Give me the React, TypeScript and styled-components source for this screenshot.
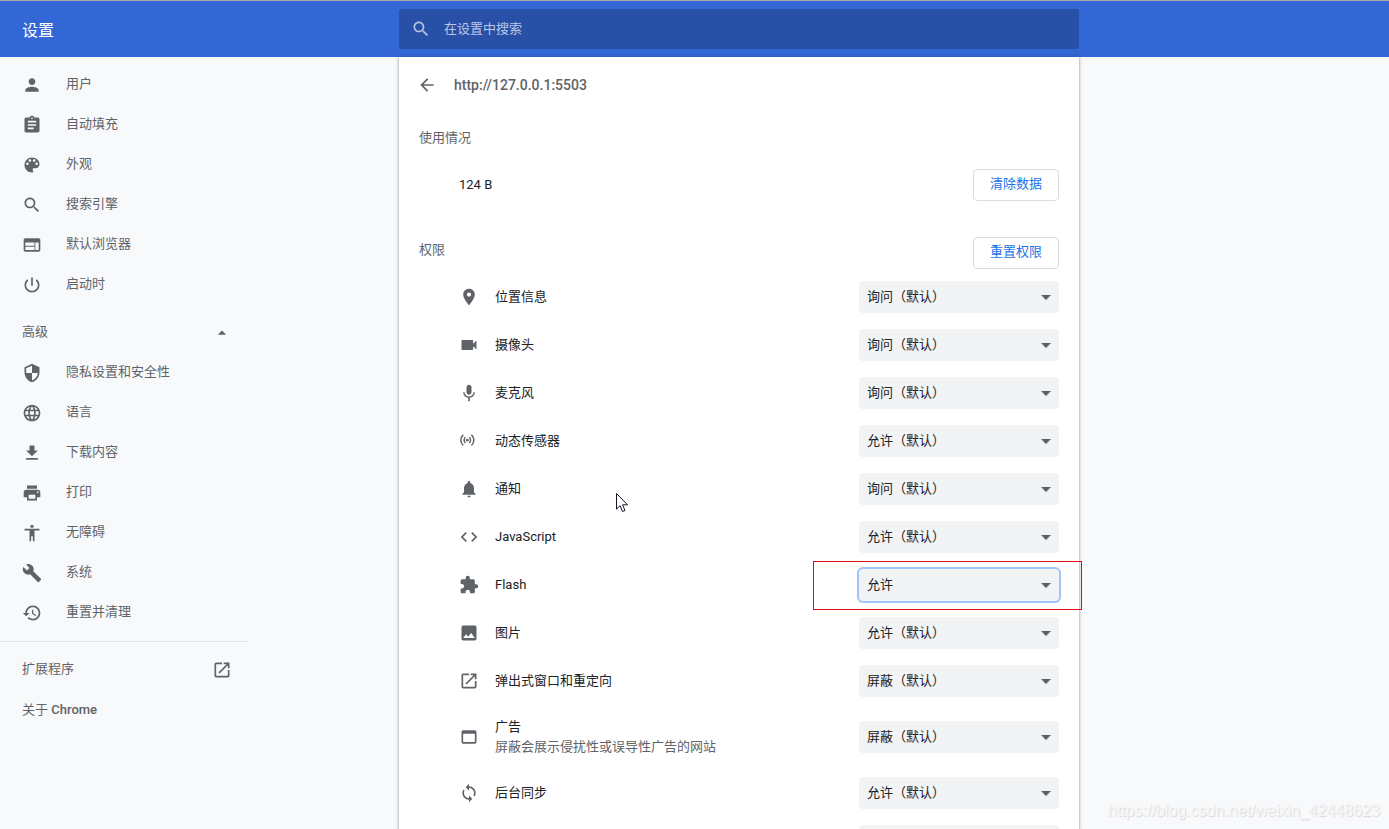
import React from "react";
import styled, { createGlobalStyle } from "styled-components";

const GlobalStyle = createGlobalStyle`
  * { box-sizing: border-box; }
  body {
    margin: 0;
    background: #f8f9fb;
    color: #202124;
    font: 13px/20px Roboto, "Noto Sans CJK SC", sans-serif;
  }
  button, input, select { font: inherit; }
  ul, h1, h2, p { margin: 0; padding: 0; font-size: inherit; font-weight: 400; }
`;

const PATHS = {
  person: "M12 12c2.21 0 4-1.79 4-4s-1.79-4-4-4-4 1.79-4 4 1.79 4 4 4zm0 2c-2.67 0-8 1.34-8 4v2h16v-2c0-2.66-5.33-4-8-4z",
  assignment: "M19 3h-4.18C14.4 1.84 13.3 1 12 1c-1.3 0-2.4.84-2.82 2H5c-1.1 0-2 .9-2 2v14c0 1.1.9 2 2 2h14c1.1 0 2-.9 2-2V5c0-1.1-.9-2-2-2zm-7 0c.55 0 1 .45 1 1s-.45 1-1 1-1-.45-1-1 .45-1 1-1zm2 14H7v-2h7v2zm3-4H7v-2h10v2zm0-4H7V7h10v2z",
  palette: "M12 3c-4.97 0-9 4.03-9 9s4.03 9 9 9c.83 0 1.5-.67 1.5-1.5 0-.39-.15-.74-.39-1.01-.23-.26-.38-.61-.38-.99 0-.83.67-1.5 1.5-1.5H16c2.76 0 5-2.24 5-5 0-4.42-4.03-8-9-8zm-5.5 9c-.83 0-1.5-.67-1.5-1.5S5.67 9 6.5 9 8 9.67 8 10.5 7.33 12 6.5 12zm3-4C8.67 8 8 7.33 8 6.5S8.67 5 9.5 5s1.5.67 1.5 1.5S10.33 8 9.5 8zm5 0c-.83 0-1.5-.67-1.5-1.5S13.67 5 14.5 5s1.5.67 1.5 1.5S15.33 8 14.5 8zm3 4c-.83 0-1.5-.67-1.5-1.5S16.67 9 17.5 9s1.5.67 1.5 1.5-.67 1.5-1.5 1.5z",
  search: "M15.5 14h-.79l-.28-.27C15.41 12.59 16 11.11 16 9.5 16 5.91 13.09 3 9.5 3S3 5.91 3 9.5 5.91 16 9.5 16c1.61 0 3.09-.59 4.23-1.57l.27.28v.79l5 4.99L20.49 19l-4.99-5zm-6 0C7.01 14 5 11.99 5 9.5S7.01 5 9.5 5 14 7.01 14 9.5 11.99 14 9.5 14z",
  web: "M20 4H4c-1.1 0-1.99.9-1.99 2L2 18c0 1.1.9 2 2 2h16c1.1 0 2-.9 2-2V6c0-1.1-.9-2-2-2zm-5 14H4v-4h11v4zm0-5H4V9h11v4zm5 5h-4V9h4v9z",
  power: "M13 3h-2v10h2V3zm4.83 2.17l-1.42 1.42C17.99 7.86 19 9.81 19 12c0 3.87-3.13 7-7 7s-7-3.13-7-7c0-2.19 1.01-4.14 2.58-5.42L6.17 5.17C4.23 6.82 3 9.26 3 12c0 4.97 4.03 9 9 9s9-4.03 9-9c0-2.74-1.23-5.18-3.17-6.83z",
  security: "M12 1L3 5v6c0 5.55 3.84 10.74 9 12 5.16-1.26 9-6.45 9-12V5l-9-4zm0 10.99h7c-.53 4.12-3.28 7.79-7 8.94V12H5V6.3l7-3.11v8.8z",
  language: "M11.99 2C6.47 2 2 6.48 2 12s4.47 10 9.99 10C17.52 22 22 17.52 22 12S17.52 2 11.99 2zm6.93 6h-2.95c-.32-1.25-.78-2.45-1.38-3.56 1.84.63 3.37 1.91 4.33 3.56zM12 4.04c.83 1.2 1.48 2.53 1.91 3.96h-3.82c.43-1.43 1.08-2.76 1.91-3.96zM4.26 14C4.1 13.36 4 12.69 4 12s.1-1.36.26-2h3.38c-.08.66-.14 1.32-.14 2 0 .68.06 1.34.14 2H4.26zm.82 2h2.95c.32 1.25.78 2.45 1.38 3.56-1.84-.63-3.37-1.9-4.33-3.56zm2.95-8H5.08c.96-1.66 2.49-2.93 4.33-3.56C8.81 5.55 8.35 6.75 8.03 8zM12 19.96c-.83-1.2-1.48-2.53-1.91-3.96h3.82c-.43 1.43-1.08 2.76-1.91 3.96zM14.34 14H9.66c-.09-.66-.16-1.32-.16-2 0-.68.07-1.35.16-2h4.68c.09.65.16 1.32.16 2 0 .68-.07 1.34-.16 2zm.25 5.56c.6-1.11 1.06-2.31 1.38-3.56h2.95c-.96 1.65-2.49 2.93-4.33 3.56zM16.36 14c.08-.66.14-1.32.14-2 0-.68-.06-1.34-.14-2h3.38c.16.64.26 1.31.26 2s-.1 1.36-.26 2h-3.38z",
  download: "M19 9h-4V3H9v6H5l7 7 7-7zM5 18v2h14v-2H5z",
  print: "M19 8H5c-1.66 0-3 1.34-3 3v6h4v4h12v-4h4v-6c0-1.66-1.34-3-3-3zm-3 11H8v-5h8v5zm3-7c-.55 0-1-.45-1-1s.45-1 1-1 1 .45 1 1-.45 1-1 1zm-1-9H6v4h12V3z",
  accessibility: "M12 2c1.1 0 2 .9 2 2s-.9 2-2 2-2-.9-2-2 .9-2 2-2zm9 7h-6v13h-2v-6h-2v6H9V9H3V7h18v2z",
  build: "M22.7 19l-9.1-9.1c.9-2.3.4-5-1.5-6.9-2-2-5-2.4-7.4-1.3L9 6 6 9 1.6 4.7C.4 7.1.9 10.1 2.9 12.1c1.9 1.9 4.6 2.4 6.9 1.5l9.1 9.1c.4.4 1 .4 1.4 0l2.3-2.3c.5-.4.5-1.1.1-1.4z",
  restore: "M13 3c-4.97 0-9 4.03-9 9H1l3.89 3.89.07.14L9 12H6c0-3.87 3.13-7 7-7s7 3.13 7 7-3.13 7-7 7c-1.93 0-3.68-.79-4.94-2.06l-1.42 1.42C8.27 19.99 10.51 21 13 21c4.97 0 9-4.03 9-9s-4.03-9-9-9zm-1 5v5l4.28 2.54.72-1.21-3.5-2.08V8H12z",
  open: "M19 19H5V5h7V3H5c-1.11 0-2 .9-2 2v14c0 1.1.89 2 2 2h14c1.1 0 2-.9 2-2v-7h-2v7zM14 3v2h3.59l-9.83 9.83 1.41 1.41L19 6.41V10h2V3h-7z",
  place: "M12 2C8.13 2 5 5.13 5 9c0 5.25 7 13 7 13s7-7.75 7-13c0-3.87-3.13-7-7-7zm0 9.5c-1.38 0-2.5-1.12-2.5-2.5s1.12-2.5 2.5-2.5 2.5 1.12 2.5 2.5-1.12 2.5-2.5 2.5z",
  videocam: "M17 10.5V7c0-.55-.45-1-1-1H4c-.55 0-1 .45-1 1v10c0 .55.45 1 1 1h12c.55 0 1-.45 1-1v-3.5l4 4v-11l-4 4z",
  mic: "M12 14c1.66 0 2.99-1.34 2.99-3L15 5c0-1.66-1.34-3-3-3S9 3.34 9 5v6c0 1.66 1.34 3 3 3zm5.3-3c0 3-2.54 5.1-5.3 5.1S6.7 14 6.7 11H5c0 3.41 2.72 6.23 6 6.72V22h2v-4.28c3.28-.48 6-3.3 6-6.72h-1.7z",
  sensors: "",
  notifications: "M12 22c1.1 0 2-.9 2-2h-4c0 1.1.89 2 2 2zm6-6v-5c0-3.07-1.64-5.64-4.5-6.32V4c0-.83-.67-1.5-1.5-1.5s-1.5.67-1.5 1.5v.68C7.63 5.36 6 7.92 6 11v5l-2 2v1h16v-1l-2-2z",
  code: "M9.4 16.6L4.8 12l4.6-4.6L8 6l-6 6 6 6 1.4-1.4zm5.2 0l4.6-4.6-4.6-4.6L16 6l6 6-6 6-1.4-1.4z",
  extension: "M20.5 11H19V7c0-1.1-.9-2-2-2h-4V3.5C13 2.12 11.88 1 10.5 1S8 2.12 8 3.5V5H4c-1.1 0-1.99.9-1.99 2v3.8H3.5c1.49 0 2.7 1.21 2.7 2.7s-1.21 2.7-2.7 2.7H2V20c0 1.1.9 2 2 2h3.8v-1.5c0-1.49 1.21-2.7 2.7-2.7 1.49 0 2.7 1.21 2.7 2.7V22H17c1.1 0 2-.9 2-2v-4h1.5c1.38 0 2.5-1.12 2.5-2.5S21.88 11 20.5 11z",
  photo: "M21 19V5c0-1.1-.9-2-2-2H5c-1.1 0-2 .9-2 2v14c0 1.1.9 2 2 2h14c1.1 0 2-.9 2-2zM8.5 13.5l2.5 3.01L14.5 12l4.5 6H5l3.5-4.5z",
  webAsset: "M19 4H5c-1.11 0-2 .9-2 2v12c0 1.1.89 2 2 2h14c1.1 0 2-.9 2-2V6c0-1.1-.9-2-2-2zm0 14H5V8h14v10z",
  sync: "M12 4V1L8 5l4 4V6c3.31 0 6 2.69 6 6 0 1.01-.25 1.97-.7 2.8l1.46 1.46C19.54 15.03 20 13.57 20 12c0-4.42-3.58-8-8-8zm0 14c-3.31 0-6-2.69-6-6 0-1.01.25-1.97.7-2.8L5.24 7.74C4.46 8.97 4 10.43 4 12c0 4.42 3.58 8 8 8v3l4-4-4-4v3z",
  back: "M20 11H7.83l5.59-5.59L12 4l-8 8 8 8 1.41-1.41L7.83 13H20v-2z",
  dropUp: "M7 14l5-5 5 5z",
};

type IconName = keyof typeof PATHS;

const IconSvg = styled.svg`
  flex: none;
  display: block;
  fill: currentColor;
`;

function Icon({ name }: { name: IconName }) {
  return (
    <IconSvg width="20" height="20" viewBox="0 0 24 24" aria-hidden="true">
      {name === "sensors" ? (
        <>
          <circle cx="10" cy="11" r="1.7" />
          <path
            d="M7.6 7.6a4.8 4.8 0 0 0 0 6.8M12.4 7.6a4.8 4.8 0 0 1 0 6.8M5.1 4.6a8.6 8.6 0 0 0 0 12.8M14.9 4.6a8.6 8.6 0 0 1 0 12.8"
            fill="none"
            stroke="currentColor"
            strokeWidth="1.8"
          />
        </>
      ) : (
        <path d={PATHS[name]} />
      )}
    </IconSvg>
  );
}

const Page = styled.div`
  position: relative;
  display: flex;
  flex-direction: column;
  height: 100vh;
  overflow: hidden;
`;

const Toolbar = styled.header`
  flex: none;
  display: flex;
  align-items: center;
  height: 57px;
  border-top: 1px solid #a9a9ad;
  background: #3367d6;
  color: #fff;
`;

const StartColumn = styled.div`
  flex: 1 0 89px;
`;

const CenterColumn = styled.div`
  flex: 0 1 680px;
  min-width: 0;
`;

const EndColumn = styled.div`
  flex: 1 0 0;
`;

const ToolbarTitle = styled.h1`
  padding: 4px 0 0 22px;
  font-size: 16px;
  line-height: 24px;
`;

const SearchField = styled.label`
  display: flex;
  align-items: center;
  gap: 13px;
  height: 40px;
  padding: 0 12px;
  border-radius: 2px;
  background: #2850a7;
  color: #b4c3e3;
`;

const SearchInput = styled.input`
  flex: 1;
  min-width: 0;
  height: 24px;
  padding: 0 0 2px;
  border: 0;
  outline: 0;
  background: none;
  color: #fff;
  &::placeholder { color: #b9c7e5; opacity: 1; }
`;

const Body = styled.div`
  flex: 1;
  display: flex;
  min-height: 0;
`;

const Sidebar = styled.nav`
  width: 248px;
  padding-top: 8px;
  color: #5f6368;
`;

const MenuList = styled.ul`
  list-style: none;
`;

const MenuLink = styled.a`
  display: flex;
  align-items: center;
  gap: 24px;
  height: 40px;
  padding-left: 22px;
  color: inherit;
  text-decoration: none;
`;

const MenuLabel = styled.span`
  padding-bottom: 2px;
`;

const AdvancedToggle = styled.button`
  display: flex;
  align-items: center;
  justify-content: space-between;
  width: 100%;
  height: 40px;
  margin-top: 8px;
  padding: 0 16px 0 22px;
  border: 0;
  background: none;
  color: inherit;
`;

const Footer = styled.div`
  margin-top: 8px;
  padding-top: 8px;
  border-top: 1px solid #e2e3e5;
`;

const FooterLink = styled(MenuLink)`
  justify-content: space-between;
  padding-right: 16px;
`;

const Medium = styled.span`
  font-weight: 500;
`;

const Card = styled(CenterColumn).attrs({ as: "main" })`
  padding: 8px 20px 0;
  background: #fff;
  box-shadow: 0 1px 2px rgba(60, 64, 67, 0.4), 0 0 3px 1px rgba(60, 64, 67, 0.2);
`;

const CardHeader = styled.div`
  display: flex;
  align-items: center;
  gap: 17px;
  height: 40px;
  color: #5f6368;
`;

const BackButton = styled.button`
  display: flex;
  padding: 0;
  margin-left: -2px;
  border: 0;
  background: none;
  color: inherit;
`;

const SiteTitle = styled.h2`
  font-size: 14px;
  font-weight: 500;
`;

const SectionBar = styled.div`
  display: flex;
  align-items: flex-start;
  justify-content: space-between;
  height: 56px;
  padding-top: 20px;
  color: #5f6368;
`;

const SectionTitle = styled.h2`
  line-height: 26px;
`;

const UsageRow = styled.div`
  display: flex;
  align-items: center;
  justify-content: space-between;
  height: 48px;
  margin-bottom: 8px;
  padding-left: 40px;
`;

const ActionButton = styled.button`
  height: 32px;
  padding: 0 15px 2px;
  border: 1px solid #dadce0;
  border-radius: 4px;
  background: #fff;
  color: #1a73e8;
  min-width: 86px;
`;

const PermissionRow = styled.li<{ $tall: boolean }>`
  position: relative;
  display: flex;
  align-items: center;
  gap: 16px;
  height: ${(p) => (p.$tall ? 64 : 48)}px;
  padding-left: 40px;
  color: #5f6368;
`;

const PermissionText = styled.label`
  flex: 1;
`;

const PermissionName = styled.span`
  display: block;
  color: #202124;
`;

const SelectBox = styled.div`
  flex: none;
  display: grid;
  align-items: center;
  width: 200px;
  height: 32px;
`;

const Select = styled.select<{ $active: boolean }>`
  grid-area: 1 / 1;
  height: 32px;
  padding: 0 8px;
  border: 0;
  border-radius: 4px;
  outline: 0;
  appearance: none;
  background: #f1f3f4;
  color: #202124;
  box-shadow: ${(p) => (p.$active ? "0 0 0 2px #a3c4f8" : "none")};
`;

const SelectArrow = styled.svg`
  grid-area: 1 / 1;
  justify-self: end;
  margin-right: 8px;
  fill: #5f6368;
  pointer-events: none;
`;

const Annotation = styled.div`
  position: absolute;
  top: 0;
  right: -23px;
  width: 269px;
  height: 49px;
  border: 1px solid #e00f12;
  pointer-events: none;
`;

const Pointer = styled.svg`
  position: absolute;
  left: 616px;
  top: 493px;
`;

const Watermark = styled.span`
  position: absolute;
  right: 9px;
  bottom: 8px;
  color: #f6f7f8;
  font: 16px/20px "Liberation Sans", sans-serif;
  text-shadow: 1px 1px 1px #d6d7da;
`;

type MenuItem = { icon: IconName; label: string };

const BASIC: MenuItem[] = [
  { icon: "person", label: "用户" },
  { icon: "assignment", label: "自动填充" },
  { icon: "palette", label: "外观" },
  { icon: "search", label: "搜索引擎" },
  { icon: "web", label: "默认浏览器" },
  { icon: "power", label: "启动时" },
];

const ADVANCED: MenuItem[] = [
  { icon: "security", label: "隐私设置和安全性" },
  { icon: "language", label: "语言" },
  { icon: "download", label: "下载内容" },
  { icon: "print", label: "打印" },
  { icon: "accessibility", label: "无障碍" },
  { icon: "build", label: "系统" },
  { icon: "restore", label: "重置并清理" },
];

const ASK = "询问（默认）";
const ALLOW = "允许（默认）";
const BLOCK = "屏蔽（默认）";

type Permission = { icon: IconName; name: string; value: string; note?: string; active?: boolean };

const PERMISSIONS: Permission[] = [
  { icon: "place", name: "位置信息", value: ASK },
  { icon: "videocam", name: "摄像头", value: ASK },
  { icon: "mic", name: "麦克风", value: ASK },
  { icon: "sensors", name: "动态传感器", value: ALLOW },
  { icon: "notifications", name: "通知", value: ASK },
  { icon: "code", name: "JavaScript", value: ALLOW },
  { icon: "extension", name: "Flash", value: "允许", active: true },
  { icon: "photo", name: "图片", value: ALLOW },
  { icon: "open", name: "弹出式窗口和重定向", value: BLOCK },
  { icon: "webAsset", name: "广告", value: BLOCK, note: "屏蔽会展示侵扰性或误导性广告的网站" },
  { icon: "sync", name: "后台同步", value: ALLOW },
];

function Menu({ items }: { items: MenuItem[] }) {
  return (
    <MenuList>
      {items.map((item) => (
        <li key={item.label}>
          <MenuLink href="#">
            <Icon name={item.icon} />
            <MenuLabel>{item.label}</MenuLabel>
          </MenuLink>
        </li>
      ))}
    </MenuList>
  );
}

function PermissionSelect({ id, value, active = false }: { id: string; value?: string; active?: boolean }) {
  return (
    <SelectBox>
      <Select id={id} $active={active} aria-label={value ? undefined : "权限"}>
        {value && <option>{value}</option>}
      </Select>
      <SelectArrow width="10" height="5" viewBox="0 0 10 5" aria-hidden="true">
        <path d="M0 0h10L5 5z" />
      </SelectArrow>
    </SelectBox>
  );
}

export default function App() {
  return (
    <Page>
      <GlobalStyle />
      <Toolbar>
        <StartColumn>
          <ToolbarTitle>设置</ToolbarTitle>
        </StartColumn>
        <CenterColumn>
          <SearchField>
            <Icon name="search" />
            <SearchInput type="search" placeholder="在设置中搜索" aria-label="在设置中搜索" />
          </SearchField>
        </CenterColumn>
        <EndColumn />
      </Toolbar>

      <Body>
        <StartColumn>
          <Sidebar>
            <Menu items={BASIC} />
            <AdvancedToggle type="button">
              <MenuLabel>高级</MenuLabel>
              <Icon name="dropUp" />
            </AdvancedToggle>
            <Menu items={ADVANCED} />
            <Footer>
              <FooterLink href="#">
                <MenuLabel>扩展程序</MenuLabel>
                <Icon name="open" />
              </FooterLink>
              <FooterLink href="#">
                <span>
                  关于 <Medium>Chrome</Medium>
                </span>
              </FooterLink>
            </Footer>
          </Sidebar>
        </StartColumn>

        <Card>
          <CardHeader>
            <BackButton type="button" aria-label="返回">
              <Icon name="back" />
            </BackButton>
            <SiteTitle>http://127.0.0.1:5503</SiteTitle>
          </CardHeader>
          <SectionBar>
            <SectionTitle>使用情况</SectionTitle>
          </SectionBar>
          <UsageRow>
            <span>124 B</span>
            <ActionButton type="button">清除数据</ActionButton>
          </UsageRow>
          <SectionBar>
            <SectionTitle>权限</SectionTitle>
            <ActionButton type="button">重置权限</ActionButton>
          </SectionBar>
          <MenuList>
            {PERMISSIONS.map((p) => (
              <PermissionRow key={p.name} $tall={Boolean(p.note)}>
                <Icon name={p.icon} />
                <PermissionText htmlFor={p.icon}>
                  <PermissionName>{p.name}</PermissionName>
                  {p.note}
                </PermissionText>
                <PermissionSelect id={p.icon} value={p.value} active={p.active} />
                {p.active && <Annotation />}
              </PermissionRow>
            ))}
            <PermissionRow $tall={false}>
              <PermissionText />
              <PermissionSelect id="next" />
            </PermissionRow>
          </MenuList>
        </Card>
        <EndColumn />
      </Body>

      <Pointer width="13" height="20" viewBox="0 0 13 20" aria-hidden="true">
        <path d="M.5.5v15.6l3.6-3.4 2.4 5.8 2.5-1-2.4-5.7h5z" fill="#fff" stroke="#16162a" />
      </Pointer>
      <Watermark>https://blog.csdn.net/weixin_42448623</Watermark>
    </Page>
  );
}
